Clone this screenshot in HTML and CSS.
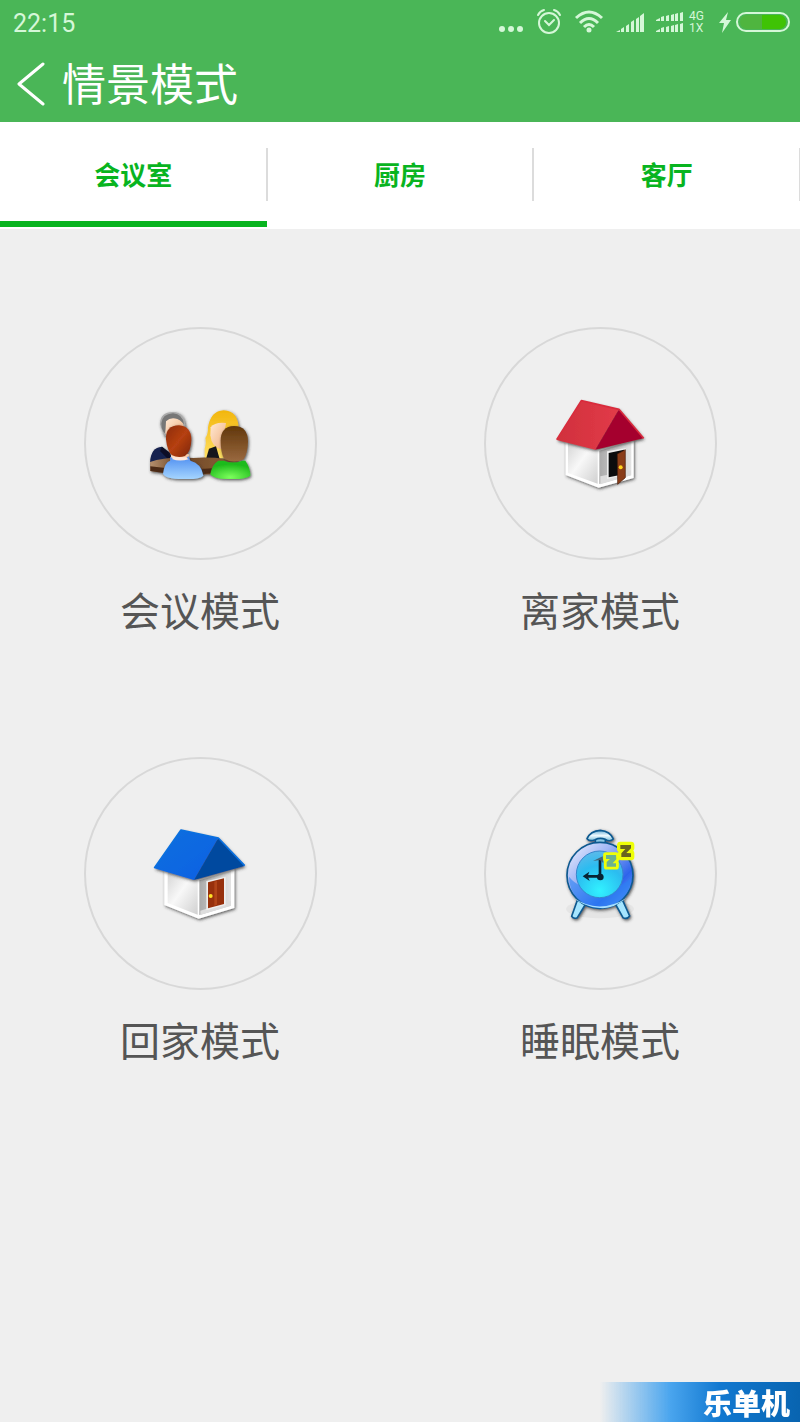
FILE: index.html
```
<!DOCTYPE html>
<html lang="zh-CN">
<head>
    <meta charset="UTF-8">
    <meta name="viewport" content="width=device-width, initial-scale=1">
    <title>情景模式</title>
    <link rel="stylesheet" href="styles.css">
</head>
<body>
    <header class="header">
        <div class="status-bar">
            <span class="time">22:15</span>
            <div class="status-icons">
                <svg class="dots" width="26" height="30" viewBox="0 0 26 30">
                    <circle cx="4" cy="22" r="3"/><circle cx="13" cy="22" r="3"/><circle cx="22" cy="22" r="3"/>
                </svg>
                <svg width="26" height="30" viewBox="0 0 26 30" fill="none" stroke="#d5f7d8" stroke-width="2" stroke-linecap="round">
                    <circle cx="13" cy="16" r="10"/>
                    <path d="M2 8Q4 4 8 3M24 8Q22 4 18 3"/>
                    <path d="M9 14L13 18L18 13"/>
                </svg>
                <svg width="30" height="30" viewBox="0 0 30 30" fill="none" stroke="#d5f7d8" stroke-width="3">
                    <path d="M2 11Q15 -1 28 11M6 16Q15 7 24 16M10 20Q15 15 20 20"/>
                    <circle cx="15" cy="23" r="2" fill="#d5f7d8" stroke="none"/>
                    <circle cx="15" cy="23" r="1"/>
                </svg>
                <svg width="28" height="30" viewBox="0 0 28 30" fill="#d5f7d8">
                    <path d="M0 25L4 23V25ZM5 22L8 20V25H5ZM10 19L13 17V25H10ZM15 15L18 13V25H15ZM20 12L23 10V25H20ZM24 9L28 6V25H24Z"/>
                </svg>
                <div class="dual">
                    <svg width="28" height="30" viewBox="0 0 28 30" fill="#d5f7d8">
                        <path d="M0 13L4 11V14H0ZM5 10L8 9V14H5ZM10 9L13 8V14H10ZM15 8L18 7V14H15ZM19 7L22 6V14H19ZM24 6L27 5V14H24Z"/>
                        <path d="M0 24L4 22V25H0ZM5 21L8 20V25H5ZM10 20L13 19V25H10ZM15 19L18 18V25H15ZM19 18L22 17V25H19ZM24 17L27 16V25H24Z"/>
                    </svg>
                    <div class="network"><span>4G</span><span>1X</span></div>
                </div>
                <svg width="72" height="30" viewBox="0 0 72 30">
                    <path d="M10 5L1 16H6L4 26L13 13H8Z" fill="#d5f7d8"/>
                    <rect x="22" y="8" width="46" height="14" rx="7" fill="#4fb53f"/>
                    <path d="M44 8H61A7 7 0 0 1 61 22H44Z" fill="#3fc305"/>
                    <rect x="19" y="6" width="52" height="18" rx="9" fill="none" stroke="#d5f7d8" stroke-width="2"/>
                </svg>
            </div>
        </div>
        <div class="title-bar">
            <button class="back" type="button" aria-label="返回">
                <svg width="30" height="44" viewBox="0 0 30 44" fill="none" stroke="#fff" stroke-width="3" stroke-linecap="round" stroke-linejoin="round">
                    <path d="M27 2L3 22L27 42"/>
                </svg>
            </button>
            <h1>情景模式</h1>
        </div>
    </header>

    <nav class="tabs">
        <button class="tab active" type="button">会议室</button>
        <button class="tab" type="button">厨房</button>
        <button class="tab" type="button">客厅</button>
    </nav>

    <main class="modes">
        <button class="mode" type="button">
            <span class="circle">
                <svg width="120" height="95" viewBox="0 0 360 285">
                    <defs>
                        <linearGradient id="hairRed" x1="0" x2="1" y1="0" y2="1"><stop offset="0" stop-color="#8d2c08"/><stop offset=".5" stop-color="#b64012"/><stop offset="1" stop-color="#7c2508"/></linearGradient>
                        <linearGradient id="hairBrown" x1="0" x2="0" y1="0" y2="1"><stop offset="0" stop-color="#61370a"/><stop offset="1" stop-color="#9a6940"/></linearGradient>
                        <linearGradient id="hairGold" x1="0" x2="0" y1="0" y2="1"><stop offset="0" stop-color="#f2b60c"/><stop offset="1" stop-color="#ffe066"/></linearGradient>
                        <linearGradient id="skin" x1="0" x2="1" y1="0" y2="1"><stop offset="0" stop-color="#ffe9d4"/><stop offset="1" stop-color="#efae7d"/></linearGradient>
                        <linearGradient id="shirtBlue" x1="0" x2="0" y1="0" y2="1"><stop offset="0" stop-color="#4d8df0"/><stop offset="1" stop-color="#a5d5ff"/></linearGradient>
                        <radialGradient id="shirtGreen" cx=".5" cy=".9" r=".7"><stop offset="0" stop-color="#7cff5c"/><stop offset="1" stop-color="#1fbb1c"/></radialGradient>
                        <linearGradient id="desk" x1="0" x2="1" y1="0" y2="0"><stop offset="0" stop-color="#b58f6d"/><stop offset=".3" stop-color="#6c4526"/><stop offset="1" stop-color="#94653a"/></linearGradient>
                        <filter id="shade" x="-10%" y="-10%" width="125%" height="125%"><feDropShadow dx="3" dy="4" stdDeviation="4" flood-color="#333" flood-opacity=".8"/></filter>
                    </defs>
                    <g filter="url(#shade)">
                        <path d="M30 200Q32 154 66 152L105 190L95 225L32 218Z" fill="#14224f"/>
                        <path d="M66 152L90 170L95 200L60 165Z" fill="#071027"/>
                        <path d="M60 85Q60 48 99 48Q135 48 136 95L120 120H72Z" fill="#aaa"/>
                        <path d="M64 82Q67 54 99 52Q128 54 132 85Q110 60 84 75L75 112Q64 104 64 82Z" fill="#777"/>
                        <path d="M78 76Q92 62 112 69Q131 75 132 99L94 130L76 112Z" fill="url(#skin)"/>
                        <path d="M194 190V158Q200 140 196 126Q205 114 204 94Q212 45 251 43Q296 45 296 102L280 185Z" fill="url(#hairGold)"/>
                        <path d="M212 94Q225 77 258 81L245 160Q215 155 211 118Z" fill="url(#skin)"/>
                        <path d="M207 158L228 151L240 193H197Z" fill="#16171c"/>
                        <path d="M30 198Q80 180 160 186Q240 180 315 202V225Q180 246 31 225Z" fill="url(#desk)"/>
                        <path d="M31 211Q120 225 217 217V232Q120 240 31 225Z" fill="#4c2b14"/>
                    </g>
                    <g filter="url(#shade)">
                        <path d="M94 175H146L149 202H91Z" fill="url(#skin)"/>
                        <path d="M78 130Q76 89 117 88Q154 91 154 132Q153 167 135 180Q115 187 96 178Q82 166 78 130Z" fill="url(#hairRed)"/>
                        <path d="M90 182L105 190H137L145 180L151 194Q184 202 190 239Q180 251 128 249Q76 249 69 233Q74 198 91 194Z" fill="url(#shirtBlue)"/>
                        <path d="M96 189Q118 198 146 190L137 184H101Z" fill="#ffe8dc"/>
                        <path d="M235 194H252Q278 205 307 194H316Q331 215 331 239Q314 251 270 249Q220 250 211 235Q216 205 235 194Z" fill="url(#shirtGreen)"/>
                        <path d="M242 135Q242 91 282 90Q324 91 324 137Q323 170 311 190Q281 204 252 188Q242 168 242 135Z" fill="url(#hairBrown)"/>
                    </g>
                </svg>
            </span>
            <span class="label">会议模式</span>
        </button>

        <button class="mode" type="button">
            <span class="circle">
                <svg width="110" height="110" viewBox="0 -4 330 330">
                    <defs>
                        <linearGradient id="wall" x1="0" x2="1" y1="0" y2="1"><stop offset="0" stop-color="#d4d4d4"/><stop offset=".45" stop-color="#f8f8f8"/><stop offset="1" stop-color="#d0d0d0"/></linearGradient>
                        <linearGradient id="side" x1="0" x2="1" y1="0" y2="0"><stop offset="0" stop-color="#aaa"/><stop offset="1" stop-color="#e4e4e4"/></linearGradient>
                        <linearGradient id="roofRed" x1="0" x2="1" y1="0" y2="0"><stop offset="0" stop-color="#d0303d"/><stop offset="1" stop-color="#e23b48"/></linearGradient>
                    </defs>
                    <g filter="url(#shade)">
                        <path d="M62 150L162 177L266 147V263L161 292L62 254Z" fill="#fff"/>
                        <path d="M69 155L158 181V280L69 248Z" fill="url(#wall)"/>
                        <path d="M163 181L259 153V255L163 281Z" fill="url(#side)"/>
                        <path d="M166 258L258 240V255L166 282Z" fill="#ddd"/>
                    </g>
                    <path d="M186 183L242 173V253L186 266Z" fill="#eee"/>
                    <path d="M191 188L237 178V252L191 261Z" fill="#0b0c0d"/>
                    <path d="M217 191L241 178V262L218 282Z" fill="#8a3d19" stroke="#481c0b" stroke-width="2"/>
                    <circle cx="227" cy="231" r="6" fill="#ffd21c"/>
                    <g filter="url(#shade)">
                        <path d="M109 31L222 57L151 178L35 149Z" fill="url(#roofRed)"/>
                        <path d="M222 57L296 144L151 178Z" fill="#a5062e"/>
                    </g>
                    <path d="M35 148L109 31L222 57L296 144" fill="none" stroke="#d92b3c" stroke-width="5" stroke-linejoin="round"/>
                </svg>
            </span>
            <span class="label">离家模式</span>
        </button>

        <button class="mode" type="button">
            <span class="circle">
                <svg width="110" height="110" viewBox="0 0 330 330">
                    <defs>
                        <linearGradient id="roofBlue" x1="0" x2="1" y1="0" y2="1"><stop offset="0" stop-color="#0870de"/><stop offset="1" stop-color="#0860e4"/></linearGradient>
                    </defs>
                    <g filter="url(#shade)">
                        <path d="M58 150L162 180L268 147V267L161 299L58 258Z" fill="#fff"/>
                        <path d="M68 158L158 184V287L68 252Z" fill="url(#wall)"/>
                        <path d="M163 184L258 156V260L163 288Z" fill="url(#side)"/>
                        <path d="M166 275L258 246V260L166 288Z" fill="#ddd"/>
                    </g>
                    <path d="M184 186L242 173V258L184 274Z" fill="#eee"/>
                    <path d="M189 190L237 178V255L189 268Z" fill="#97300c"/>
                    <path d="M208 188L216 186V257L208 260Z" fill="#b14418"/>
                    <circle cx="197" cy="231" r="6" fill="#ffe126"/>
                    <g filter="url(#shade)">
                        <path d="M108 33L220 57L147 183L28 148Z" fill="url(#roofBlue)"/>
                        <path d="M220 57L299 141L147 183Z" fill="#044a9f"/>
                    </g>
                    <path d="M28 147L108 33L220 57L299 140" fill="none" stroke="#0a70df" stroke-width="5" stroke-linejoin="round"/>
                </svg>
            </span>
            <span class="label">回家模式</span>
        </button>

        <button class="mode" type="button">
            <span class="circle">
                <svg width="100" height="110" viewBox="0 0 300 330">
                    <defs>
                        <linearGradient id="rim" x1="0" x2="1" y1="0" y2="1"><stop offset="0" stop-color="#f2f5ff"/><stop offset=".35" stop-color="#a3b8f5"/><stop offset=".7" stop-color="#2d64eb"/><stop offset="1" stop-color="#78b7ff"/></linearGradient>
                        <radialGradient id="dial" cx=".5" cy=".85" r=".9"><stop offset="0" stop-color="#31f2ff"/><stop offset=".6" stop-color="#2bbcf0"/><stop offset="1" stop-color="#63b9e8"/></radialGradient>
                        <linearGradient id="bell" x1="0" x2="0" y1="0" y2="1"><stop offset="0" stop-color="#69aed5"/><stop offset=".5" stop-color="#eefaff"/><stop offset="1" stop-color="#79bedb"/></linearGradient>
                    </defs>
                    <ellipse cx="150" cy="270" rx="102" ry="28" fill="#ddd" opacity=".6"/>
                    <g filter="url(#shade)" stroke="#0f5a90" stroke-width="5" stroke-linejoin="round">
                        <path d="M82 244L65 292Q71 301 82 296L107 255ZM218 244L239 291Q231 302 219 296L196 255Z" fill="#a5e5ff"/>
                        <path d="M136 57H166V82H136Z" fill="#8bc6e2"/>
                        <path d="M111 59Q121 36 151 34Q181 37 190 60Q180 70 166 61Q150 55 135 62Q119 69 111 59Z" fill="url(#bell)"/>
                        <circle cx="150" cy="169" r="99" fill="url(#rim)"/>
                    </g>
                    <path d="M57 173A93 93 0 0 0 243 177Q203 215 150 211Q88 212 57 173Z" fill="#2a80f4" opacity=".6"/>
                    <circle cx="149" cy="166" r="70" fill="url(#dial)" stroke="#3687cd" stroke-width="3"/>
                    <path d="M68 235Q146 289 231 236Q184 274 144 266Q100 263 68 235Z" fill="#a8e0ff"/>
                    <path d="M150 174V122M151 172H105" stroke="#082334" stroke-width="8"/>
                    <path d="M98 172L118 158L113 172L119 186Z" fill="#082334"/>
                    <path d="M129 126L158 112L160 133L150 123Z" fill="#466475"/>
                    <circle cx="151" cy="174" r="10" fill="#082334"/>
                    <g stroke-linejoin="round">
                        <path d="M168 108H198L199 121L188 133H198V143H170V129L180 120H168Z" fill="#59b79a" stroke="#eeff08" stroke-width="17"/>
                        <path d="M168 108H198L199 121L188 133H198V143H170V129L180 120H168Z" fill="#6cb38e"/>
                        <path d="M211 78H243V88L229 102L243 103V114H214V103L226 90H211Z" fill="#756c21" stroke="#eeff08" stroke-width="20"/>
                        <path d="M211 78H243V88L229 102L243 103V114H214V103L226 90H211Z" fill="#68651f"/>
                    </g>
                </svg>
            </span>
            <span class="label">睡眠模式</span>
        </button>
    </main>

    <div class="watermark">乐单机</div>
</body>
</html>
```
FILE: styles.css
```
* {
    box-sizing: border-box;
}

body {
    margin: 0;
    min-height: 100vh;
    background-color: #efefef;
    font-family: "Noto Sans CJK SC", sans-serif;
    color: #555;
}

button {
    margin: 0;
    padding: 0;
    border: none;
    background: none;
    font-family: inherit;
    color: inherit;
    cursor: pointer;
}

svg {
    display: block;
}

/* Header */
.header {
    background-color: #4ab657;
    color: #fff;
}

.status-bar {
    display: flex;
    justify-content: space-between;
    align-items: center;
    height: 46px;
    padding: 0 10px 0 13px;
    color: #d5f7d8;
}

.time {
    font-family: Roboto, sans-serif;
    font-size: 25px;
}

.status-icons {
    display: flex;
    align-items: center;
    gap: 12px;
    height: 46px;
    padding-bottom: 2px;
}

.dots {
    fill: #d5f7d8;
}

.dual {
    display: flex;
    align-items: center;
    gap: 5px;
    width: 50px;
}

.network {
    font-family: Roboto, sans-serif;
    font-size: 12px;
    line-height: 12px;
}

.network span {
    display: block;
}

.title-bar {
    display: flex;
    align-items: center;
    height: 76px;
    padding: 0 16px;
    gap: 16px;
}

.title-bar h1 {
    margin: 0;
    padding-bottom: 4px;
    font-size: 44px;
    line-height: 64px;
    font-weight: 400;
}

/* Room tabs */
.tabs {
    display: flex;
    height: 107px;
    background-color: #fff;
    overflow: hidden;
}

.tab {
    flex: 1;
    position: relative;
    padding-bottom: 4px;
    color: #08b41f;
    font-size: 26px;
    font-weight: 700;
}

.tab::after {
    content: "";
    position: absolute;
    top: 26px;
    right: -1px;
    width: 2px;
    height: 53px;
    background-color: #dcdcdc;
}

.tab.active::before {
    content: "";
    position: absolute;
    left: 0;
    right: 0;
    bottom: 2px;
    height: 6px;
    background-color: #08b41f;
}

/* Scene modes */
.modes {
    display: grid;
    grid-template-columns: 1fr 1fr;
    row-gap: 123px;
    padding: 98px 0;
}

.mode {
    display: flex;
    flex-direction: column;
    align-items: center;
    gap: 24px;
}

.circle {
    display: flex;
    justify-content: center;
    align-items: center;
    width: 233px;
    height: 233px;
    border: 2px solid #d8d8d8;
    border-radius: 50%;
}

.label {
    font-size: 40px;
    line-height: 50px;
}

.watermark {
    position: fixed;
    right: 0;
    bottom: 0;
    width: 200px;
    height: 40px;
    padding-right: 10px;
    background: linear-gradient(to right, rgba(36, 145, 235, 0), #4aa5ee 35%, #1178d0 60%, #0864b0);
    color: #fff;
    font-size: 29px;
    line-height: 40px;
    font-weight: 900;
    text-align: right;
}
```
